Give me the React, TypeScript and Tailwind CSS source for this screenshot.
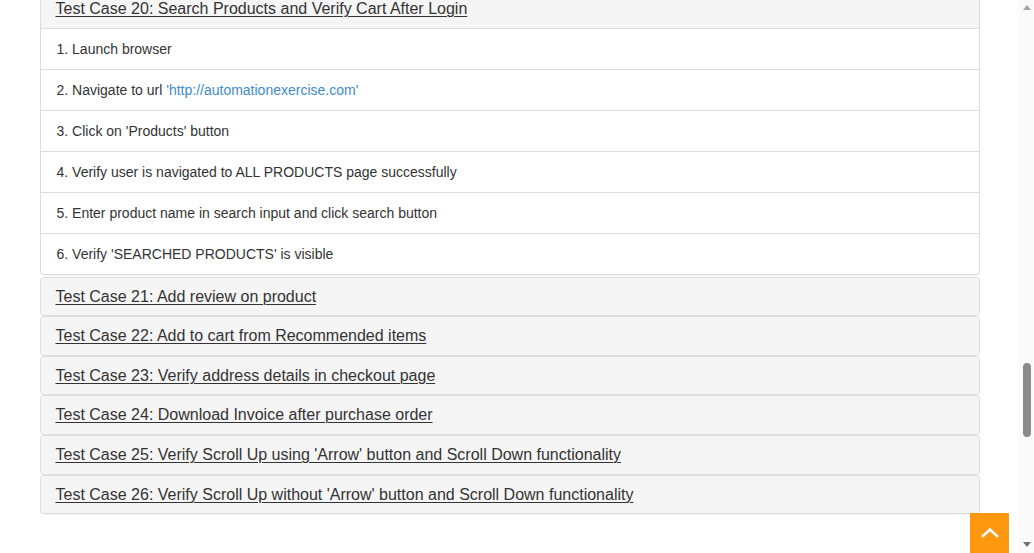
import React from "react";

const steps: React.ReactNode[] = [
  "1. Launch browser",
  <>
    2. Navigate to url <span className="text-[#428bca]">'http://automationexercise.com'</span>
  </>,
  "3. Click on 'Products' button",
  "4. Verify user is navigated to ALL PRODUCTS page successfully",
  "5. Enter product name in search input and click search button",
  "6. Verify 'SEARCHED PRODUCTS' is visible",
];

const others = [
  "Test Case 21: Add review on product",
  "Test Case 22: Add to cart from Recommended items",
  "Test Case 23: Verify address details in checkout page",
  "Test Case 24: Download Invoice after purchase order",
  "Test Case 25: Verify Scroll Up using 'Arrow' button and Scroll Down functionality",
  "Test Case 26: Verify Scroll Up without 'Arrow' button and Scroll Down functionality",
];

function Heading({ title }: { title: string }) {
  return (
    <div className="bg-[#f5f5f5] px-[15px] py-[10px] rounded-[4px] text-[16px] leading-[17.6px]">
      <a className="text-[#333] underline underline-offset-[2px] decoration-1">{title}</a>
    </div>
  );
}

export default function App() {
  return (
    <div
      className="relative flex h-[553px] w-[1034px] overflow-hidden bg-white"
      style={{ fontFamily: '"Liberation Sans", Arial, sans-serif' }}
    >
      <main className="flex-1">
        <div className="mx-auto w-[970px] px-[15px] -mt-[11px]">
          <div className="rounded-[4px] border border-[#ddd] bg-white shadow-[0_1px_1px_rgba(0,0,0,0.05)]">
            <div className="bg-[#f5f5f5] px-[15px] py-[10px] rounded-t-[4px] border-b border-[#ddd] text-[16px] leading-[17.6px]">
              <a className="text-[#333] underline underline-offset-[2px] decoration-1">
                Test Case 20: Search Products and Verify Cart After Login
              </a>
            </div>
            <ul>
              {steps.map((s, i) => (
                <li
                  key={i}
                  className={`pl-[16px] pr-[15px] py-[10px] text-[14px] leading-[20px] text-[#333] ${i > 0 ? "border-t border-[#ddd]" : ""}`}
                >
                  {s}
                </li>
              ))}
            </ul>
          </div>
          <div className="mt-[2px]">
            {others.map((t) => (
              <div
                key={t}
                className="rounded-[4px] border border-[#ddd] shadow-[0_1px_1px_rgba(0,0,0,0.05)]"
              >
                <Heading title={t} />
              </div>
            ))}
          </div>
        </div>
      </main>
      <aside className="flex w-[15px] flex-col items-center bg-[#fafafa]">
        <div className="mt-[5px] h-0 w-0 border-x-[4px] border-b-[5px] border-x-transparent border-b-[#a3a3a3]" />
        <div className="flex-1 w-full flex flex-col items-center">
          <div className="mt-[353px] h-[74px] w-[8px] rounded-full bg-[#8a8a8a]" />
        </div>
        <div className="mb-[6px] h-0 w-0 border-x-[4px] border-t-[5px] border-x-transparent border-t-[#6e6e6e]" />
      </aside>
      <button className="absolute bottom-0 right-[25px] flex h-[40px] w-[39px] items-center justify-center bg-[#fe980f]">
        <svg width="18" height="12" viewBox="0 0 18 12" fill="none">
          <path d="M2 9 L9 2.5 L16 9" stroke="white" strokeWidth="2.6" strokeLinecap="square" />
        </svg>
      </button>
    </div>
  );
}
